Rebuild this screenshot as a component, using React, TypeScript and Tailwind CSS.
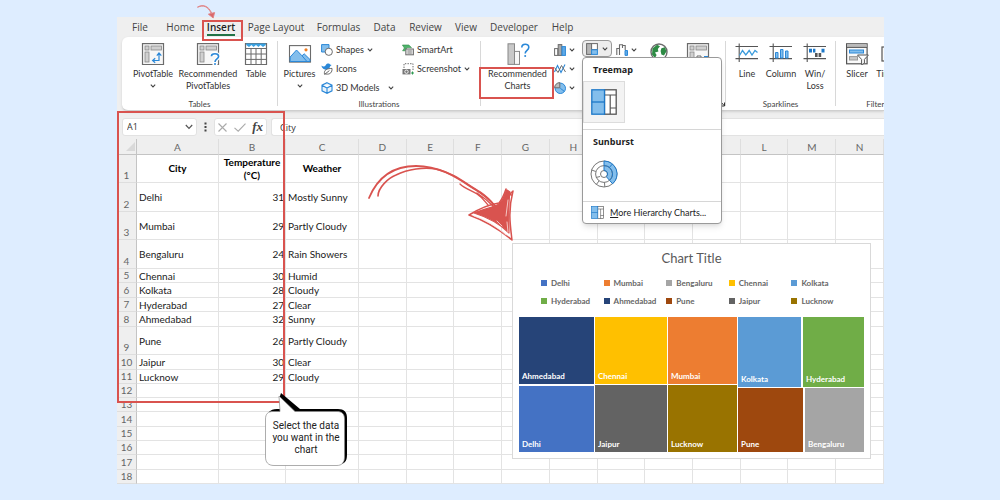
import type { ReactNode } from "react";

const GRAY = "#6b6b6b";
const BLUE = "#2b88d8";
const RED = "#d9534f";

function Chevron({ className = "" }: { className?: string }) {
  return (
    <svg className={"shrink-0 " + className} width="6" height="4" viewBox="0 0 6 4" fill="none" stroke="#444" strokeWidth="1.1">
      <path d="M0.8 0.7 3 2.9 5.2 0.7" />
    </svg>
  );
}

/* ---------- large ribbon icons, 24 x 22 ---------- */

function Big({ children }: { children: ReactNode }) {
  return (
    <svg width="24" height="22" viewBox="0 0 24 22" fill="none" className="shrink-0">
      {children}
    </svg>
  );
}

function PivotFrame() {
  return (
    <>
      <rect x="1.5" y="0.6" width="21" height="21" fill="#f7f7f7" stroke={GRAY} strokeWidth="1.2" />
      <rect x="4" y="3" width="4" height="4" fill="#d0d0d0" stroke="#888" strokeWidth="0.8" />
      <rect x="10" y="3" width="10.5" height="4" fill="#d0d0d0" stroke="#888" strokeWidth="0.8" />
      <rect x="4" y="9" width="4" height="10" fill="#d0d0d0" stroke="#888" strokeWidth="0.8" />
    </>
  );
}

const QUESTION = "M15.4 13.2C15.4 10 22.6 9.8 22.6 13.4 22.6 16 19 15.8 19 19";

function PivotTableIcon() {
  return (
    <Big>
      <PivotFrame />
      <path d="M12 17.5H18V10.5M14.2 15.2 11.6 17.5 14.2 19.8M15.8 12.6 18 10 20.3 12.6" stroke={BLUE} strokeWidth="1.2" />
    </Big>
  );
}

function RecommendedPivotIcon() {
  return (
    <Big>
      <PivotFrame />
      <path d={QUESTION} stroke="#fff" strokeWidth="4" />
      <rect x="16.5" y="18" width="5" height="4" fill="#fff" />
      <path d={QUESTION} stroke={BLUE} strokeWidth="1.6" />
      <circle cx="19" cy="21" r="1" fill={BLUE} />
    </Big>
  );
}

function TableIcon() {
  return (
    <Big>
      <rect x="1.5" y="0.6" width="21" height="21" fill="#fff" />
      <path d="M1.5 5.5H22.5M1.5 11H22.5M1.5 16.4H22.5M7 5.5V21M12 5.5V21M17.2 5.5V21" stroke={GRAY} strokeWidth="1" />
      <rect x="1.5" y="0.6" width="21" height="21" stroke={GRAY} strokeWidth="1.2" />
      <path d="M2.2 0.5H21.8V2L19 4 16.5 2 14.5 4 12 2 9.5 4 7.5 2 5 4 2.2 2Z" fill="#38a0e0" />
    </Big>
  );
}

function PicturesIcon() {
  return (
    <Big>
      <rect x="1.5" y="2.6" width="21" height="16.5" fill="#fff" stroke={GRAY} strokeWidth="1.1" />
      <path d="M2.2 14 8.5 7 14 12.8 16.2 10.8 22 16.5V18.5H2.2Z" fill="#83beec" stroke={BLUE} strokeWidth="1" />
      <path d="M14 12.8 18.5 18" stroke={BLUE} />
      <circle cx="18" cy="6.8" r="1.6" fill="#ef7d22" />
    </Big>
  );
}

function RecommendedChartsIcon() {
  return (
    <Big>
      <rect x="2" y="0.8" width="6.5" height="20.6" fill="#c8c8c8" stroke="#888" />
      <rect x="8.5" y="8.4" width="5" height="13" fill="#f7f7f7" stroke="#888" />
      <path d="M15.8 4.5C15.8 0.2 22.8 0.2 22.8 4.2 22.8 7.4 19.2 7.2 19.2 10.4" stroke={BLUE} strokeWidth="1.6" />
      <circle cx="19.2" cy="13" r="1" fill={BLUE} />
    </Big>
  );
}

function GlobeIcon() {
  return (
    <Big>
      <circle cx="12" cy="9" r="8" fill="#fff" stroke={GRAY} strokeWidth="1.4" />
      <path d="M5.5 5.5 10 1.8 13 3.2 10.8 6 11.4 8.4 8 9.4 9.6 12 8 15 5 11.5ZM14.4 5.2 18 4.2 19.4 8.5 17 12.5 14.4 11.6 13.6 8Z" fill="#2e8b45" />
    </Big>
  );
}

function PivotChartIcon() {
  return (
    <Big>
      <PivotFrame />
      <path d="M11 20V13H15V20M15 16H18V20" stroke={GRAY} fill="#fff" />
      <rect x="18" y="13" width="4" height="8" fill={BLUE} />
    </Big>
  );
}

function SparkFrame() {
  return <path d="M0.5 3.5H23M0.5 15.6H23M4.2 0.5V19" stroke="#555" strokeWidth="1.1" />;
}

function SparkLineIcon() {
  return (
    <Big>
      <SparkFrame />
      <path d="M4.5 12.5 7.5 7.5 10.8 12 14.2 7.5 17 12 20 7.5 22.5 9.5" stroke="#3a9bdc" strokeWidth="1.3" />
    </Big>
  );
}

function SparkColumnIcon() {
  return (
    <Big>
      <SparkFrame />
      <path d="M6.5 9.5H9V15H6.5ZM11.5 6.5H14V15H11.5ZM16.5 8H19V15H16.5Z" fill="#83beec" stroke={BLUE} />
    </Big>
  );
}

function WinLossIcon() {
  return (
    <Big>
      <SparkFrame />
      <path d="M6 5.8H9V9.4H6ZM10 5.8H12.4V9.4H10ZM18.5 5.8H21.5V9.4H18.5Z" fill="#1d78c8" />
      <path d="M12 10H14.6V14H12ZM15.6 10H18.2V14H15.6Z" fill="#555" />
    </Big>
  );
}

function SlicerIcon() {
  return (
    <Big>
      <rect x="1.6" y="0.8" width="20.5" height="20" fill="#fafafa" stroke="#555" strokeWidth="1.2" />
      <rect x="2" y="1.2" width="19.6" height="3" fill="#bbb" />
      <path d="M1.6 4.4H22" stroke="#555" />
      <rect x="4.5" y="7" width="14" height="3" fill="#83beec" stroke={BLUE} />
      <rect x="4.5" y="13.6" width="8" height="3.4" fill="#c8c8c8" stroke="#999" />
      <path d="M12.5 12H23.4L19.4 16.4V20.2L16.6 21.8V16.4Z" fill="#fff" stroke="#555" />
    </Big>
  );
}

function TimelineIcon() {
  return (
    <Big>
      <rect x="1" y="4" width="21" height="14" fill="#fafafa" stroke="#555" strokeWidth="1.2" />
      <path d="M4 8H19M4 13H12" stroke={BLUE} strokeWidth="2" />
    </Big>
  );
}

/* ---------- small ribbon icons, 12 x 12 ---------- */

function Small({ children }: { children: ReactNode }) {
  return (
    <svg width="12" height="12" viewBox="0 0 12 12" fill="none" className="shrink-0">
      {children}
    </svg>
  );
}

const shapesIcon = (
  <Small>
    <path d="M0.6 0.6H8V5L4.5 8H0.6Z" fill="#83beec" stroke={BLUE} />
    <circle cx="7.8" cy="7.8" r="3.6" fill="#fff" stroke={GRAY} />
  </Small>
);
const iconsIcon = (
  <Small>
    <path d="M0.5 2.5C2 4 4 3.8 4.8 2 6 0.2 8.5 0.2 9 1.6L10.6 2 9 3.4C8.6 6 6 7.2 4 6.4 2 6 0.6 4.5 0.5 2.5Z" fill={BLUE} />
    <path d="M3.4 10.8C3 6.6 6 5.6 11 5.4 11.4 9 9.2 11.8 5 11Z" fill="#fff" stroke={GRAY} />
    <path d="M3.4 11.5 8.4 7.6" stroke={GRAY} />
  </Small>
);
const modelsIcon = (
  <Small>
    <path d="M6 0.7 11 3.2V8.8L6 11.3 1 8.8V3.2Z M1 3.2 6 6 11 3.2 M6 6V11.3" fill="#e8f3fc" stroke={BLUE} strokeWidth="1.1" />
  </Small>
);
const smartArtIcon = (
  <Small>
    <path d="M0.4 1H6.8L9.5 3.6H5L3.2 6.8H0.6L2.4 4Z" fill="#4fb36b" stroke="#2e8b45" strokeWidth="0.6" />
    <rect x="3.8" y="5" width="7.6" height="5.8" fill="#e4e4e4" stroke={GRAY} />
    <path d="M5.5 7H9.8M5.5 9H9.8" stroke={GRAY} strokeWidth="0.8" />
  </Small>
);
const screenshotIcon = (
  <Small>
    <path d="M2 5V0.7H11V8" stroke={GRAY} strokeDasharray="1.4 1.2" />
    <rect x="0.5" y="6" width="8" height="5.4" fill="#777" />
    <circle cx="4.5" cy="8.7" r="1.7" fill="#777" stroke="#fff" strokeWidth="0.9" />
    <path d="M9 10H12M10.5 8.5V11.5" stroke="#2e9b52" />
  </Small>
);
const columnIcon = (
  <Small>
    <rect x="0.6" y="4.6" width="3.2" height="6.8" fill="#fff" stroke={GRAY} />
    <rect x="4.2" y="0.6" width="3.6" height="10.8" fill="#a8a8a8" stroke={GRAY} />
    <rect x="8" y="2.6" width="3.4" height="8.8" fill="#5fa9e6" stroke={BLUE} />
  </Small>
);
const lineIcon = (
  <Small>
    <path d="M0.5 9 3.5 2.5 7 9.5 11 1.5" stroke={BLUE} strokeWidth="1.1" />
    <path d="M0.5 4.5 4 9.5 7.5 2.5 11.5 9" stroke={GRAY} />
  </Small>
);
const pieIcon = (
  <Small>
    <circle cx="6.3" cy="6.3" r="5.2" fill="#83beec" stroke={BLUE} />
    <path d="M5.8 5.8V0.6A5.2 5.2 0 0 0 0.6 5.8Z" fill="#bcbcbc" stroke={GRAY} />
    <path d="M6.3 6.3 10.4 9.4" stroke={BLUE} />
  </Small>
);
const treemapMini = (
  <Small>
    <rect x="0.6" y="0.6" width="5" height="10.8" fill="#b5b5b5" stroke={GRAY} />
    <rect x="5.6" y="0.6" width="5.8" height="6" fill="#fff" stroke={GRAY} />
    <rect x="5.6" y="6.8" width="5.8" height="4.6" fill="#83beec" stroke={BLUE} />
  </Small>
);
const waterfallIcon = (
  <Small>
    <path d="M0.8 11V4.5H3.5V11M3.5 4.5V0.8H6.5V4M6.5 1.5H9.2V6" stroke={GRAY} strokeWidth="1.1" />
    <path d="M9 6.5H11.5V11.4H9Z" fill="#5fa9e6" stroke={BLUE} />
  </Small>
);

/* ---------- ribbon pieces ---------- */

function Group({ label, width, children, footer }: { label?: string; width: string; children: ReactNode; footer?: ReactNode }) {
  return (
    <section className={"flex shrink-0 flex-col justify-between pt-[3px] " + width}>
      <div className="flex">{children}</div>
      <div className="h-3 text-center text-[8px] leading-3 text-[#444]">
        {label}
        {footer}
      </div>
    </section>
  );
}

function Separator() {
  return <div className="my-1 w-px shrink-0 bg-[#d8d8d8]" />;
}

function BigButton({ icon, lines, width, chevron }: { icon: ReactNode; lines: string[]; width: string; chevron?: boolean }) {
  return (
    <button className={"flex shrink-0 flex-col items-center pt-[3px] leading-3 whitespace-nowrap " + width}>
      {icon}
      <span className="mt-[3px]">{lines[0]}</span>
      {lines[1] && <span>{lines[1]}</span>}
      {chevron && <Chevron className="mt-1" />}
    </button>
  );
}

function RowButton({ icon, text, chevron }: { icon: ReactNode; text: string; chevron?: "near" | "far" }) {
  return (
    <button className="flex h-[19px] items-center gap-[3px] whitespace-nowrap">
      {icon}
      <span>{text}</span>
      {chevron && <Chevron className={chevron === "far" ? "ml-[5px]" : ""} />}
    </button>
  );
}

function MiniButton({ icon, label }: { icon: ReactNode; label: string }) {
  return (
    <button aria-label={label} className="flex h-[19px] items-center gap-[3px]">
      {icon}
      <Chevron />
    </button>
  );
}

function TreemapGlyph({ size }: { size: number }) {
  return (
    <svg width={size} height={size} viewBox="0 0 26 26" fill="none">
      <rect x="13.5" y="0.8" width="11.7" height="24.4" fill="#fff" stroke="#555" strokeWidth="1.3" />
      <path d="M13.5 6H25M19.2 6V25M19.2 19H25" stroke="#555" strokeWidth="1.2" />
      <rect x="0.8" y="0.8" width="12.7" height="24.4" fill="#83beec" stroke="#1d78c8" strokeWidth="1.3" />
      <path d="M0.8 13H13.5" stroke="#1d78c8" strokeWidth="1.3" />
    </svg>
  );
}

function SunburstGlyph() {
  return (
    <svg width="28" height="28" viewBox="0 0 28 28" fill="none">
      <circle cx="14" cy="14" r="13" fill="#fff" stroke="#777" />
      <path d="M14 1A13 13 0 0 1 22.6 23.8L14 14Z" fill="#83beec" stroke="#1d78c8" />
      <circle cx="14" cy="14" r="8.4" stroke="#777" />
      <path d="M14 5.6A8.4 8.4 0 0 1 19.6 20.3M22.2 4.2 19.3 7.5" stroke="#1d78c8" />
      <path d="M5.8 11.5 1.6 10M9 21 6.4 24.4M14.5 22.4 14.8 27M10 16.5 6 17.5" stroke="#777" />
      <circle cx="14" cy="14" r="3.5" fill="#fff" stroke="#777" />
      <path d="M14 10.5A3.5 3.5 0 0 1 16.4 16.6" stroke="#1d78c8" />
    </svg>
  );
}

function HierarchyMenu() {
  return (
    <div role="menu" className="absolute top-full left-0 z-20 w-[140px] rounded-[4px] border border-[#9a9a9a] bg-white text-[#222] shadow-md">
      <h3 className="pt-[6px] pl-[10px] font-['Open_Sans','Liberation_Sans',sans-serif] leading-3 font-bold">Treemap</h3>
      <button aria-label="Treemap" className="mt-[5px] flex size-[42px] items-center justify-center border border-[#dcdcdc] bg-[#f3f3f3]">
        <TreemapGlyph size={26} />
      </button>
      <h3 className="mt-[6px] border-t border-[#d6d6d6] pt-[6px] pl-[10px] font-['Open_Sans','Liberation_Sans',sans-serif] leading-3 font-bold">Sunburst</h3>
      <button aria-label="Sunburst" className="mt-[5px] flex size-[42px] items-center justify-center">
        <SunburstGlyph />
      </button>
      <button className="mt-[6px] flex h-[22px] w-full items-center gap-[6px] border-t border-[#d6d6d6] pl-2 whitespace-nowrap">
        <TreemapGlyph size={13} />
        <span>
          <u>M</u>ore Hierarchy Charts...
        </span>
      </button>
    </div>
  );
}

const tabs: [string, string][] = [
  ["File", "w-[34px]"],
  ["Home", "w-[47px]"],
  ["Insert", "w-[34px]"],
  ["Page Layout", "w-[76px]"],
  ["Formulas", "w-[49px]"],
  ["Data", "w-[43px]"],
  ["Review", "w-[39px]"],
  ["View", "w-[42px]"],
  ["Developer", "w-[54px]"],
  ["Help", "w-[43px]"],
];

function Ribbon() {
  return (
    <div>
      <nav className="flex h-5 pl-[6px] text-[10px] text-[#444]">
        {tabs.map(([name, width]) => (
          <button key={name} className={"flex shrink-0 items-start justify-center pt-[3px] whitespace-nowrap " + width}>
            <span className={"leading-[14px] " + (name === "Insert" ? "border-b-2 border-[#217346] font-semibold text-[#222]" : "")}>{name}</span>
          </button>
        ))}
      </nav>
      <div className="ml-[5px] flex h-[74px] rounded-l-md border-b border-[#cfcfcf] bg-white font-['Lato','Liberation_Sans',sans-serif] text-[9px] text-[#333] shadow-sm">
        <Group label="Tables" width="w-[155px]">
          <div className="flex pl-2">
            <BigButton icon={<PivotTableIcon />} lines={["PivotTable"]} width="w-[46px]" chevron />
            <BigButton icon={<RecommendedPivotIcon />} lines={["Recommended", "PivotTables"]} width="w-[64px]" />
            <BigButton icon={<TableIcon />} lines={["Table"]} width="w-[32px]" />
          </div>
        </Group>
        <Separator />
        <Group label="Illustrations" width="w-[202px]">
          <BigButton icon={<PicturesIcon />} lines={["Pictures"]} width="w-[43px]" chevron />
          <div className="flex w-[81px] flex-col">
            <RowButton icon={shapesIcon} text="Shapes" chevron="near" />
            <RowButton icon={iconsIcon} text="Icons" />
            <RowButton icon={modelsIcon} text="3D Models" chevron="far" />
          </div>
          <div className="flex flex-col">
            <RowButton icon={smartArtIcon} text="SmartArt" />
            <RowButton icon={screenshotIcon} text="Screenshot" chevron="near" />
          </div>
        </Group>
        <Separator />
        <Group
          width="w-[244px]"
          footer={
            <svg className="mt-[3px] ml-auto" width="5" height="6" viewBox="0 0 5 6" fill="none" stroke="#333">
              <path d="M1 1 4 4.5M4.5 1.5V5H1" />
            </svg>
          }
        >
          <BigButton icon={<RecommendedChartsIcon />} lines={["Recommended", "Charts"]} width="w-[73px]" />
          <div className="flex w-[28px] flex-col">
            <MiniButton icon={columnIcon} label="Column charts" />
            <MiniButton icon={lineIcon} label="Line charts" />
            <MiniButton icon={pieIcon} label="Pie charts" />
          </div>
          <div className="relative h-[17px]">
            <button aria-label="Hierarchy charts" className="flex h-[17px] w-[30px] items-center justify-center gap-1 rounded-[4px] border border-[#999] bg-[#ededed]">
              {treemapMini}
              <Chevron />
            </button>
            <HierarchyMenu />
          </div>
          <div className="ml-1 w-6">
            <MiniButton icon={waterfallIcon} label="Waterfall charts" />
          </div>
          <BigButton icon={<GlobeIcon />} lines={["Maps"]} width="w-[38px]" />
          <BigButton icon={<PivotChartIcon />} lines={["PivotChart"]} width="w-[40px]" />
        </Group>
        <Separator />
        <Group label="Sparklines" width="w-[109px]">
          <div className="flex pl-1">
            <BigButton icon={<SparkLineIcon />} lines={["Line"]} width="w-[34px]" />
            <BigButton icon={<SparkColumnIcon />} lines={["Column"]} width="w-[34px]" />
            <BigButton icon={<WinLossIcon />} lines={["Win/", "Loss"]} width="w-[34px]" />
          </div>
        </Group>
        <Separator />
        <Group label="Filters" width="w-[82px]">
          <BigButton icon={<SlicerIcon />} lines={["Slicer"]} width="w-[42px]" />
          <BigButton icon={<TimelineIcon />} lines={["Timeline"]} width="w-[30px]" />
        </Group>
      </div>
    </div>
  );
}

function FormulaBar() {
  return (
    <div className="flex h-7 items-center pt-1 pl-[5px] text-[9px] text-[#333]">
      <div className="flex h-[18px] w-[75px] items-center rounded-[3px] border border-[#e2e2e2] bg-white pr-[3px]">
        <input aria-label="Name box" defaultValue="A1" className="w-0 flex-1 bg-transparent pl-1 outline-none" />
        <svg width="8" height="6" viewBox="0 0 8 6" fill="none" stroke="#555" strokeWidth="1.2">
          <path d="M0.8 1 4 4.4 7.2 1" />
        </svg>
      </div>
      <svg className="mx-[7px]" width="3" height="10" viewBox="0 0 3 10" fill="#444">
        <rect x="0.5" y="0.5" width="2" height="2" />
        <rect x="0.5" y="4" width="2" height="2" />
        <rect x="0.5" y="7.5" width="2" height="2" />
      </svg>
      <div className="flex h-[18px] w-[53px] items-center justify-between rounded-[3px] border border-[#e2e2e2] bg-white px-[3px]">
        <svg width="9" height="9" viewBox="0 0 9 9" stroke="#aaa" strokeWidth="1.1">
          <path d="M0.5 0.5 8.5 8.5M8.5 0.5 0.5 8.5" />
        </svg>
        <svg width="12" height="9" viewBox="0 0 12 9" fill="none" stroke="#aaa" strokeWidth="1.1">
          <path d="M0.5 4.8 4.2 8.2 11.5 0.6" />
        </svg>
        <span className="font-['Liberation_Serif',serif] text-[13px] leading-4 font-bold text-[#444] italic">fx</span>
      </div>
      <input
        aria-label="Formula bar"
        defaultValue="City"
        className="ml-1 h-[18px] w-0 flex-1 rounded-l-[3px] border-y border-l border-[#e2e2e2] bg-white pl-2 outline-none"
      />
    </div>
  );
}

/* ---------- worksheet ---------- */

const columns = "ABCDEFGHIJKLMN".split("");

const rows: { h: string; cells?: [string, string, string] }[] = [
  { h: "h-7", cells: ["City", "Temperature (°C)", "Weather"] },
  { h: "h-[29px]", cells: ["Delhi", "31", "Mostly Sunny"] },
  { h: "h-7", cells: ["Mumbai", "29", "Partly Cloudy"] },
  { h: "h-[29px]", cells: ["Bengaluru", "24", "Rain Showers"] },
  { h: "h-[14px]", cells: ["Chennai", "30", "Humid"] },
  { h: "h-[15px]", cells: ["Kolkata", "28", "Cloudy"] },
  { h: "h-[14px]", cells: ["Hyderabad", "27", "Clear"] },
  { h: "h-[15px]", cells: ["Ahmedabad", "32", "Sunny"] },
  { h: "h-7", cells: ["Pune", "26", "Partly Cloudy"] },
  { h: "h-[15px]", cells: ["Jaipur", "30", "Clear"] },
  { h: "h-[14px]", cells: ["Lucknow", "29", "Cloudy"] },
  { h: "h-[14px]" },
  { h: "h-[14px]" },
  { h: "h-[15px]" },
  { h: "h-[14px]" },
  { h: "h-[14px]" },
  { h: "h-[15px]" },
  { h: "h-[14px]" },
];

function Sheet() {
  return (
    <table className="w-full table-fixed border-separate border-spacing-0 bg-white font-['Lato','Liberation_Sans',sans-serif] text-[10px] text-[#1a1a1a]">
      <colgroup>
        <col className="w-5" />
        <col className="w-[82px]" />
        <col className="w-[67px]" />
        <col className="w-[73px]" />
      </colgroup>
      <thead>
        <tr className="h-4 bg-[#efefef] text-[#666]">
          <th className="border-r border-b border-[#c4c4c4] p-0">
            <svg className="ml-auto" width="12" height="12" viewBox="0 0 12 12" aria-label="Select all">
              <path d="M11 1V10H2Z" fill="#d9d9d9" />
            </svg>
          </th>
          {columns.map((c) => (
            <th key={c} scope="col" className="border-r border-b border-r-[#dedede] border-b-[#c4c4c4] p-0 leading-3 font-normal">
              {c}
            </th>
          ))}
        </tr>
      </thead>
      <tbody>
        {rows.map(({ h, cells }, r) => (
          <tr key={r} className={h}>
            <th scope="row" className="border-r border-b border-r-[#c4c4c4] border-b-[#dedede] bg-[#efefef] p-0 text-center align-bottom leading-[13px] font-normal text-[#666]">
              {r + 1}
            </th>
            {columns.map((c, i) => (
              <td
                key={c}
                className={
                  "border-r border-b border-[#e3e3e3] p-0 " +
                  (r === 0 ? "text-center leading-[13px] font-bold text-black" : i === 1 ? "pr-px text-right leading-3" : "pl-[2px] leading-3 whitespace-nowrap")
                }
              >
                {cells?.[i]}
              </td>
            ))}
          </tr>
        ))}
      </tbody>
    </table>
  );
}

/* ---------- treemap chart ---------- */

const legend: [string, string][] = [
  ["Delhi", "bg-[#4472c4]"],
  ["Mumbai", "bg-[#ed7d31]"],
  ["Bengaluru", "bg-[#a5a5a5]"],
  ["Chennai", "bg-[#ffc000]"],
  ["Kolkata", "bg-[#5b9bd5]"],
  ["Hyderabad", "bg-[#70ad47]"],
  ["Ahmedabad", "bg-[#264478]"],
  ["Pune", "bg-[#9e480e]"],
  ["Jaipur", "bg-[#636363]"],
  ["Lucknow", "bg-[#997300]"],
];

function Tile({ name, className }: { name: string; className: string }) {
  return <div className={"flex items-end pb-[3px] pl-[3px] leading-[10px] " + className}>{name}</div>;
}

function TreemapChart() {
  return (
    <figure className="absolute top-[243px] left-[512px] z-10 flex w-[359px] flex-col border border-[#d9d9d9] bg-white p-[6px] font-['Lato','Liberation_Sans',sans-serif] text-[8px] font-bold text-[#666]">
      <figcaption className="text-center text-[13px] leading-4 font-normal text-[#595959]">Chart Title</figcaption>
      <ul className="mt-2 grid grid-cols-5 pr-[10px] pl-[22px]">
        {legend.map(([name, color]) => (
          <li key={name} className="flex h-[18px] items-center gap-1 whitespace-nowrap">
            <span className={"size-[6px] " + color} />
            {name}
          </li>
        ))}
      </ul>
      <div className="mt-[7px] flex h-[135px] gap-px text-white">
        <div className="flex w-[75px] flex-col gap-[2px]">
          <Tile name="Ahmedabad" className="h-[67px] bg-[#264478]" />
          <Tile name="Delhi" className="flex-1 bg-[#4472c4]" />
        </div>
        <div className="flex w-[72px] flex-col gap-px">
          <Tile name="Chennai" className="h-[67px] bg-[#ffc000]" />
          <Tile name="Jaipur" className="flex-1 bg-[#636363]" />
        </div>
        <div className="flex w-[69px] flex-col gap-px">
          <Tile name="Mumbai" className="h-[67px] bg-[#ed7d31]" />
          <Tile name="Lucknow" className="flex-1 bg-[#997300]" />
        </div>
        <div className="flex flex-1 flex-col gap-px">
          <div className="flex h-[70px] gap-[2px]">
            <Tile name="Kolkata" className="w-[63px] bg-[#5b9bd5]" />
            <Tile name="Hyderabad" className="flex-1 bg-[#70ad47]" />
          </div>
          <div className="flex flex-1 gap-[2px]">
            <Tile name="Pune" className="w-[65px] bg-[#9e480e]" />
            <Tile name="Bengaluru" className="flex-1 bg-[#a5a5a5]" />
          </div>
        </div>
      </div>
    </figure>
  );
}

/* ---------- tutorial annotations ---------- */

function Annotations() {
  return (
    <div className="pointer-events-none">
      <div className="absolute top-5 left-[202px] h-[21px] w-[41px] border-2 border-[#d9534f]" />
      <div className="absolute top-[67px] left-[479px] h-8 w-[75px] border-2 border-[#d9534f]" />
      <div className="absolute top-[111px] left-[117px] h-[292px] w-[168px] border-2 border-[#d9534f]" />

      <svg className="absolute top-1 left-[196px]" width="20" height="16" viewBox="0 0 20 16" fill="none" stroke="#e07f80" strokeWidth="0.9">
        <path d="M1 3.4C6 0 12.5 1.2 15.8 9.4M2 3.2C7 .6 12 2.4 15 9" />
        <path d="M12.4 10.2 15 9.4 18.6 8.6 17.2 14Z" fill="#d9686a" />
      </svg>

      <svg className="absolute top-[160px] left-[364px]" width="156" height="84" viewBox="0 0 156 84" fill="none" stroke={RED} strokeLinecap="round" strokeLinejoin="round">
        <path d="M5 38C15 14 32 6 52 6 78 6 96 20 112 30 120 35 126 40 131 46" strokeWidth="1.8" />
        <path d="M14 36C14 28 24 18 32 15 44 9 60 7 72 9 90 13 102 24 116 32 122 36 127 41 131 46" strokeWidth="1.6" />
        <path d="M96 24C100 28 108 31 113 34 119 38 121 42 124 45M113 33C119 37 124 41 129 46" strokeWidth="1.4" />
        <path d="M110 53C120 49 130 47 135 44 140 40 141 32 143 30L146 32C144 46 145 60 145 73 136 64 126 58 110 53Z" fill={RED} strokeWidth="1.2" />
        <path
          d="M105 55C118 47 128 44 135 43 139 38 141 32 142 29M105 55C122 61 136 70 148 80 146 64 144 50 149 31M142 30 147 35M149 31 143 37"
          strokeWidth="1.5"
        />
        <path d="M110 56C122 60 132 66 142 75M144 40 142 56M133 61 138 66M143 62 144 72" stroke="#fbe3e1" strokeWidth="0.8" />
      </svg>

      <div className="absolute top-[392px] left-[264px] z-20 h-[76px] w-[84px]">
        <svg className="absolute inset-0" width="84" height="76" viewBox="0 0 84 76">
          <path d="M5 20C7 18 9 17 13 17H16V4L17 1 36 17H74C80 17 83 20 83 26V62C83 68 82 70 78 72L70 73Z" fill="#000" />
          <path d="M9 19.5H16L15 4 31 19.5H73C78 19.5 80.5 22 80.5 27V65C80.5 70 78 73.5 73 73.5H10C4 73.5 1.5 70 1.5 65V27C1.5 22 4 19.5 9 19.5Z" fill="#fff" stroke="#8a8a8a" strokeWidth="0.7" />
        </svg>
        <p className="relative pt-7 text-center font-['Roboto','Liberation_Sans',sans-serif] text-[10px] leading-3 whitespace-nowrap text-[#222]">
          Select the data
          <br />
          you want in the
          <br />
          chart
        </p>
      </div>
    </div>
  );
}

export default function App() {
  return (
    <main className="relative min-h-screen bg-[#deedff] pt-[17px] pr-[116px] pb-4 pl-[117px] font-['Open_Sans','Liberation_Sans',sans-serif]">
      <div className="overflow-hidden bg-[#efefef]">
        <Ribbon />
        <FormulaBar />
        <Sheet />
      </div>
      <TreemapChart />
      <Annotations />
    </main>
  );
}
